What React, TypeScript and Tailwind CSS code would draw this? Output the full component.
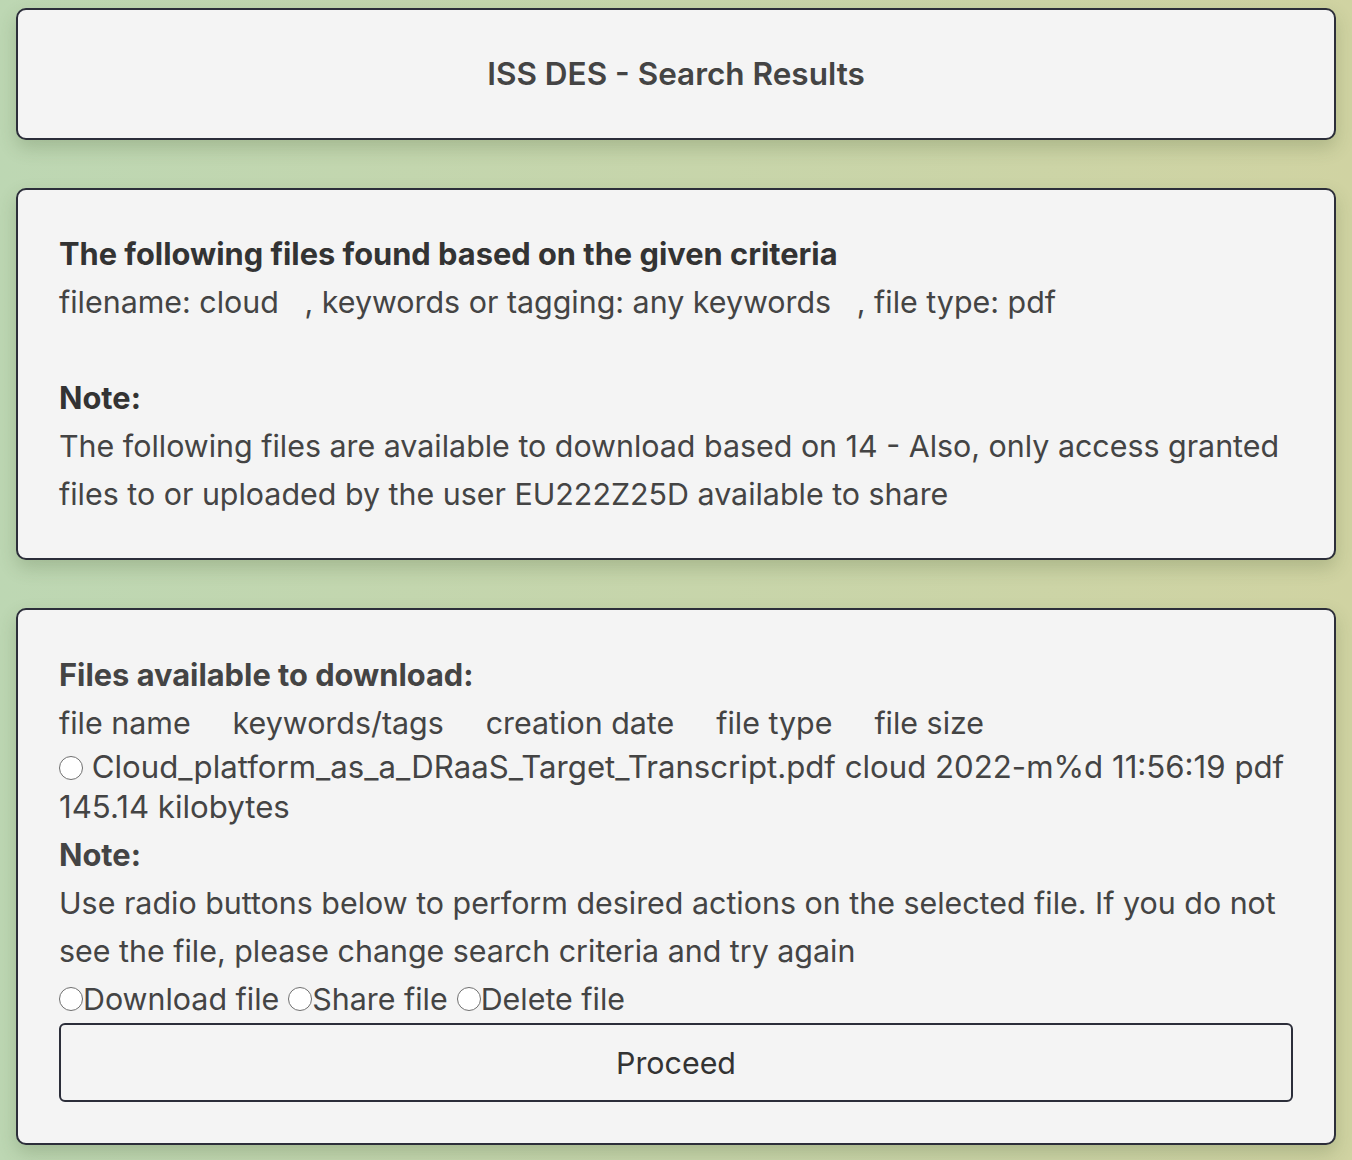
import React, { useState } from 'react';

const Radio: React.FC<{ checked?: boolean; onClick?: () => void }> = ({ checked, onClick }) => (
    <span
        onClick={onClick}
        className="inline-block align-[-2px] w-[24px] h-[24px] rounded-full border-[1.5px] border-[#6f6f6f] bg-white relative cursor-pointer"
    >
        {checked && <span className="absolute inset-[4px] rounded-full bg-[#2f6fde]" />}
    </span>
);

const Card: React.FC<{ children: React.ReactNode; className?: string }> = ({ children, className }) => (
    <section
        className={`bg-[#f4f4f4] border-2 border-[#2c2e3a] rounded-[10px] px-[41px] py-[40px] shadow-[0_8px_18px_rgba(60,80,40,0.22)] ${className ?? ''}`}
    >
        {children}
    </section>
);

export default function App() {
    const [fileSel, setFileSel] = useState(false);
    const [action, setAction] = useState<string | null>(null);

    const columns = ['file name', 'keywords/tags', 'creation date', 'file type', 'file size'];

    return (
        <div
            className="min-h-[1160px] bg-gradient-to-r from-[#bdd7b3] to-[#d0d3a2] px-4 pt-2 pb-4 text-[30.4px] leading-[48px] text-[#444] flex flex-col gap-[48px]"
            style={{ fontFamily: 'Inter, "Noto Sans", sans-serif' }}
        >
            {/* Header */}
            <Card>
                <h1 className="text-center font-semibold text-[31.5px] text-[#444]">ISS DES - Search Results</h1>
            </Card>

            {/* Criteria */}
            <Card>
                <p className="font-bold text-[30.8px] text-[#333]">The following files found based on the given criteria</p>
                <p>
                    filename: cloud&nbsp;&nbsp;&nbsp;, keywords or tagging: any keywords&nbsp;&nbsp;&nbsp;, file type: pdf
                </p>
                <div className="h-12" />
                <p className="font-bold text-[30.8px] text-[#333]">Note:</p>
                <p>
                    The following files are available to download based on 14 - Also, only access granted files to or uploaded by the user EU222Z25D available to share
                </p>
            </Card>

            {/* Files */}
            <Card className="pt-[41px] pb-[41px]">
                <p className="font-bold text-[30.8px] text-[#444]">Files available to download:</p>
                <div className="flex gap-[42px]">
                    {columns.map((c) => (
                        <span key={c}>{c}</span>
                    ))}
                </div>
                <div className="text-[31.2px] leading-[40px] pb-1">
                    <Radio checked={fileSel} onClick={() => setFileSel(!fileSel)} /> Cloud_platform_as_a_DRaaS_Target_Transcript.pdf cloud 2022-m%d 11:56:19 pdf 145.14 kilobytes
                </div>
                <p className="font-bold text-[30.8px] text-[#444]">Note:</p>
                <p>
                    Use radio buttons below to perform desired actions on the selected file. If you do not see the file, please change search criteria and try again
                </p>
                <div className="flex items-center">
                    {['Download file', 'Share file', 'Delete file'].map((a) => (
                        <label key={a} className="flex items-center mr-[9px] cursor-pointer" onClick={() => setAction(a)}>
                            <Radio checked={action === a} />
                            <span>{a}</span>
                        </label>
                    ))}
                </div>
                <button className="w-full h-[79px] border-2 border-[#2c2e3a] rounded-[6px] text-[30.4px] text-[#333] bg-[#f4f4f4]">
                    Proceed
                </button>
            </Card>
        </div>
    );
}
